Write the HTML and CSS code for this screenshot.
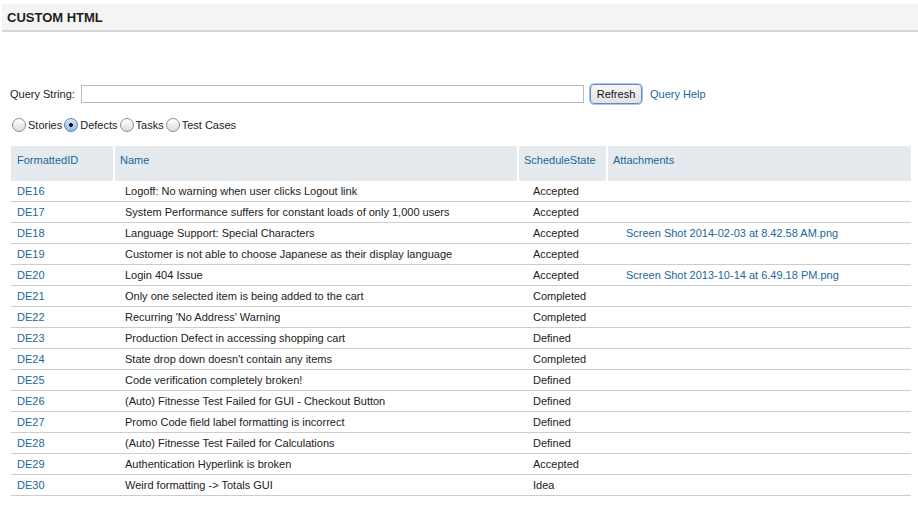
FILE: index.html
```html
<!DOCTYPE html>
<html>
<head>
<meta charset="utf-8">
<link rel="stylesheet" href="styles.css">
</head>
<body>
<div class="titlebar"><span class="title">CUSTOM HTML</span></div>
<div class="content">
  <div class="query">
    <label class="qlabel">Query String:</label>
    <span class="qinput"></span>
    <span class="btn">Refresh</span>
    <a class="link qhelp">Query Help</a>
  </div>
  <div class="radios">
    <span class="radio first"></span><span class="rlabel">Stories</span>
    <span class="radio checked"></span><span class="rlabel">Defects</span>
    <span class="radio"></span><span class="rlabel">Tasks</span>
    <span class="radio"></span><span class="rlabel">Test Cases</span>
  </div>
  <table class="grid">
    <colgroup><col class="c1"><col class="c2"><col class="c3"><col class="c4"></colgroup>
    <thead>
      <tr><th>FormattedID</th><th>Name</th><th>ScheduleState</th><th>Attachments</th></tr>
    </thead>
    <tbody>
      <tr><td class="id">DE16</td><td class="nm">Logoff: No warning when user clicks Logout link</td><td class="st">Accepted</td><td class="at"></td></tr>
      <tr><td class="id">DE17</td><td class="nm">System Performance suffers for constant loads of only 1,000 users</td><td class="st">Accepted</td><td class="at"></td></tr>
      <tr><td class="id">DE18</td><td class="nm">Language Support: Special Characters</td><td class="st">Accepted</td><td class="at">Screen Shot 2014-02-03 at 8.42.58 AM.png</td></tr>
      <tr><td class="id">DE19</td><td class="nm">Customer is not able to choose Japanese as their display language</td><td class="st">Accepted</td><td class="at"></td></tr>
      <tr><td class="id">DE20</td><td class="nm">Login 404 Issue</td><td class="st">Accepted</td><td class="at">Screen Shot 2013-10-14 at 6.49.18 PM.png</td></tr>
      <tr><td class="id">DE21</td><td class="nm">Only one selected item is being added to the cart</td><td class="st">Completed</td><td class="at"></td></tr>
      <tr><td class="id">DE22</td><td class="nm">Recurring 'No Address' Warning</td><td class="st">Completed</td><td class="at"></td></tr>
      <tr><td class="id">DE23</td><td class="nm">Production Defect in accessing shopping cart</td><td class="st">Defined</td><td class="at"></td></tr>
      <tr><td class="id">DE24</td><td class="nm">State drop down doesn't contain any items</td><td class="st">Completed</td><td class="at"></td></tr>
      <tr><td class="id">DE25</td><td class="nm">Code verification completely broken!</td><td class="st">Defined</td><td class="at"></td></tr>
      <tr><td class="id">DE26</td><td class="nm">(Auto) Fitnesse Test Failed for GUI - Checkout Button</td><td class="st">Defined</td><td class="at"></td></tr>
      <tr><td class="id">DE27</td><td class="nm">Promo Code field label formatting is incorrect</td><td class="st">Defined</td><td class="at"></td></tr>
      <tr><td class="id">DE28</td><td class="nm">(Auto) Fitnesse Test Failed for Calculations</td><td class="st">Defined</td><td class="at"></td></tr>
      <tr><td class="id">DE29</td><td class="nm">Authentication Hyperlink is broken</td><td class="st">Accepted</td><td class="at"></td></tr>
      <tr><td class="id">DE30</td><td class="nm">Weird formatting -&gt; Totals GUI</td><td class="st">Idea</td><td class="at"></td></tr>
    </tbody>
  </table>
</div>
</body>
</html>
```
FILE: styles.css
```css
html, body {
  margin: 0;
  padding: 0;
  background: #fff;
}
body {
  font-family: "Liberation Sans", Arial, sans-serif;
  font-size: 11px;
  color: #222;
}
.titlebar {
  margin: 4px 0 0 2px;
  height: 26px;
  background: #f4f4f4;
  border-bottom: 2px solid #d6d6d6;
  display: flex;
  align-items: center;
}
.title {
  font-weight: bold;
  font-size: 13px;
  color: #1e1e1e;
  padding-left: 5px;
}
.content {
  padding: 51px 0 0 11px;
}
.query {
  display: flex;
  align-items: center;
  height: 22px;
}
.qlabel {
  margin-left: -1px;
  width: 71px;
}
.qinput {
  width: 501px;
  height: 16px;
  border: 1px solid #b9b9b9;
  background: #fff;
}
.btn {
  margin-left: 6px;
  box-sizing: border-box;
  width: 52px;
  height: 20px;
  border: 1px solid #5f8fc4;
  border-radius: 4px;
  box-shadow: 0 0 0 1px #a9c9ec;
  background: linear-gradient(#f7f7f7, #e2e2e2);
  color: #111;
  font-size: 11px;
  display: flex;
  align-items: center;
  justify-content: center;
}
.link, .qhelp {
  color: #21679a;
  text-decoration: none;
}
.qhelp {
  margin-left: 8px;
}
.radios {
  display: flex;
  align-items: center;
  margin-top: 10px;
  height: 20px;
}
.radio {
  box-sizing: border-box;
  width: 14px;
  height: 14px;
  border-radius: 50%;
  border: 1px solid #8d8d8d;
  background: linear-gradient(#ffffff, #dcdcdc);
  margin-right: 2px;
  margin-left: 2px;
}
.radio.first {
  margin-left: 1px;
}
.radio.checked {
  border-color: #5a7fae;
  background: radial-gradient(circle at 50% 50%, #111 0, #111 1.6px, transparent 2.2px), linear-gradient(#d7e8fa, #8fb9e8);
}
.grid {
  margin-top: 11px;
  width: 900px;
  border-collapse: collapse;
  table-layout: fixed;
}
.c1 { width: 103px; }
.c2 { width: 404px; }
.c3 { width: 89px; }
.c4 { width: 304px; }
.grid th {
  background: #e4eaed;
  color: #21679a;
  font-weight: normal;
  text-align: left;
  vertical-align: top;
  height: 35px;
  box-sizing: border-box;
  padding: 8px 0 0 5px;
  line-height: 13px;
  border-left: 2px solid #fff;
}
.grid th:first-child {
  border-left: 0;
  padding-left: 6px;
}
.grid td {
  height: 20px;
  padding: 0;
  border-bottom: 1px solid #cdcdcd;
  white-space: nowrap;
  overflow: hidden;
}
.grid td.id { color: #21679a; padding-left: 6px; }
.grid td.nm { padding-left: 11px; }
.grid td.st { padding-left: 15px; }
.grid td.at { padding-left: 19px; color: #21679a; }
```
